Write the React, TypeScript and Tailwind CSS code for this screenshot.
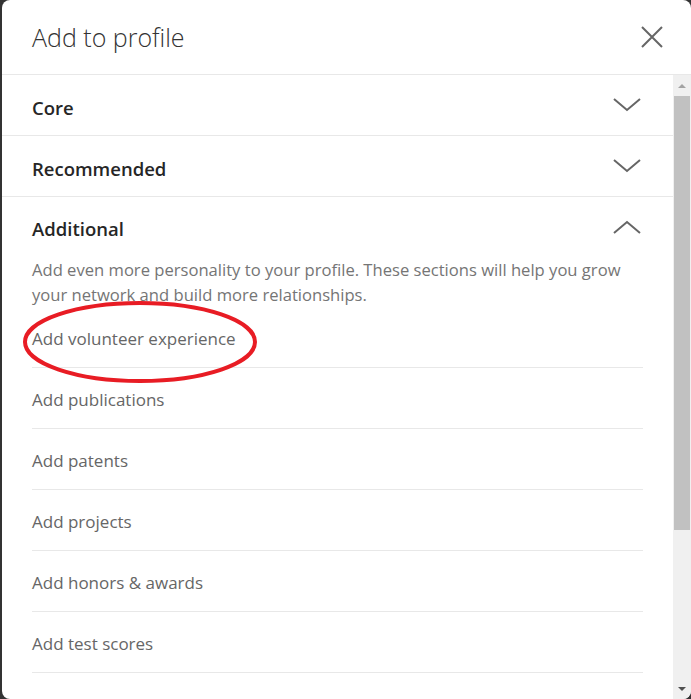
import React from "react";

const items = [
  "Add volunteer experience",
  "Add publications",
  "Add patents",
  "Add projects",
  "Add honors & awards",
  "Add test scores",
  "Add languages",
];

function Chevron({ up = false }: { up?: boolean }) {
  return (
    <svg width="28" height="14" viewBox="0 0 28 14" className="shrink-0">
      <path
        d={up ? "M1 13 L14 2 L27 13" : "M1 1 L14 12 L27 1"}
        fill="none"
        stroke="#666"
        strokeWidth="2"
      />
    </svg>
  );
}

function Section({ title }: { title: string }) {
  return (
    <div className="flex h-[61px] items-center justify-between border-b border-[#e8e8e8] pl-[30px] pr-[32px]">
      <span className="pt-[5px] text-[18.5px] font-semibold text-[#262626]">{title}</span>
      <Chevron />
    </div>
  );
}

export default function App() {
  return (
    <div className="h-[699px] w-[691px] overflow-hidden bg-[#333]">
      <div
        className="ml-[2px] flex h-[699px] flex-col overflow-hidden rounded-[8px] bg-white"
        style={{ fontFamily: '"Open Sans", "Noto Sans", sans-serif' }}
      >
        <div className="flex h-[75px] shrink-0 items-center justify-between border-b border-[#e8e8e8] pl-[30px] pr-[28px]">
          <h1 className="pt-[2px] text-[25px] font-light text-[#333]">Add to profile</h1>
          <svg width="22" height="22" viewBox="0 0 22 22">
            <path d="M1 1 L21 21 M21 1 L1 21" stroke="#666" strokeWidth="2" />
          </svg>
        </div>
        <div className="flex min-h-0 flex-1">
          <div className="relative min-w-0 flex-1">
            <Section title="Core" />
            <Section title="Recommended" />
            <div className="flex h-[60px] items-center justify-between pl-[30px] pr-[32px]">
              <span className="pt-[3px] text-[18.5px] font-semibold text-[#262626]">Additional</span>
              <Chevron up />
            </div>
            <p className="pl-[30px] pr-[30px] text-[16.6px] leading-[25px] text-[#757575]">
              Add even more personality to your profile. These sections will help you grow
              your network and build more relationships.
            </p>
            <ul className="pl-[30px] pr-[30px]">
              {items.map((item) => (
                <li
                  key={item}
                  className="flex h-[61px] items-center border-b border-[#e8e8e8] pt-[4px] text-[17px] text-[#666]"
                >
                  {item}
                </li>
              ))}
            </ul>
            <svg
              width="240"
              height="86"
              viewBox="0 0 240 86"
              className="pointer-events-none absolute left-[19px] top-[224px]"
            >
              <ellipse cx="119" cy="43" rx="115" ry="39" fill="none" stroke="#e81c24" strokeWidth="4" />
            </svg>
          </div>
          <div className="flex w-[18px] shrink-0 flex-col items-center bg-[#f0f0f0] pt-[9px] pb-[8px]">
            <div className="h-0 w-0 border-x-[4px] border-b-[4px] border-x-transparent border-b-[#a3a3a3]" />
            <div className="mt-[8px] h-[434px] w-[16px] bg-[#c1c1c1]" />
            <div className="flex-1" />
            <div className="h-0 w-0 border-x-[4px] border-t-[4px] border-x-transparent border-t-[#505050]" />
          </div>
        </div>
      </div>
    </div>
  );
}
